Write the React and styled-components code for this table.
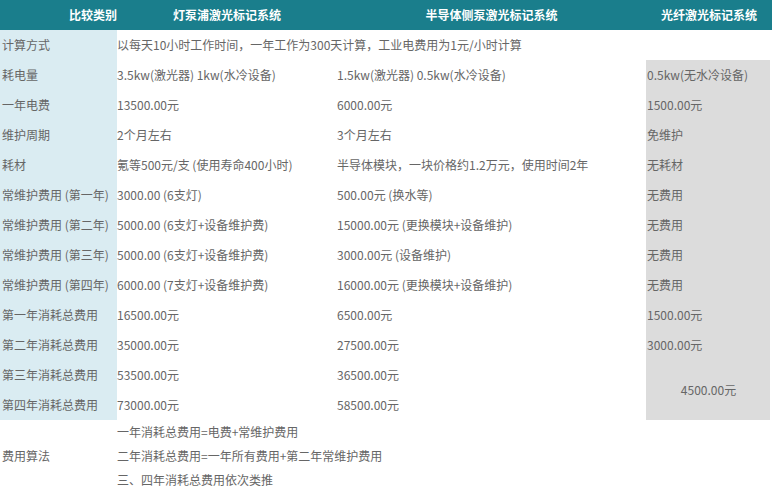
import React from "react";
import styled, { createGlobalStyle } from "styled-components";

const GlobalStyle = createGlobalStyle`
  html, body {
    margin: 0;
    padding: 0;
    background: #ffffff;
  }
  body {
    font-family: "Noto Sans CJK SC", "Noto Sans", sans-serif;
    font-size: 12px;
    color: #666666;
  }
`;

// === Layout ===
const Page = styled.div`
  width: 772px;
`;

const HeaderRow = styled.div`
  display: grid;
  grid-template-columns: 117px 220px 309px 126px;
  height: 30px;
  background: #1a7e8c;
`;

const HeaderCell = styled.div`
  display: flex;
  align-items: center;
  justify-content: ${(p) => (p.$right ? "flex-end" : "center")};
  padding-bottom: 2px;
  color: #ffffff;
  font-weight: 700;
  font-size: 12px;
`;

const Body = styled.div`
  display: grid;
  grid-template-columns: 117px 220px 309px 124px;
  grid-template-rows: repeat(13, 30px) repeat(3, 24px);
`;

const Cell = styled.div`
  display: flex;
  align-items: center;
  justify-content: ${(p) => (p.$center ? "center" : "flex-start")};
  padding-left: ${(p) => p.$pad || 0}px;
  padding-bottom: 2px;
  background: ${(p) => p.$bg || "transparent"};
  grid-column: ${(p) => (p.$colSpan ? `span ${p.$colSpan}` : "auto")};
  grid-row: ${(p) => (p.$rowSpan ? `span ${p.$rowSpan}` : "auto")};
  white-space: nowrap;
  overflow: hidden;
`;

const LabelCell = styled(Cell).attrs((p) => ({ $pad: 2, $bg: p.$plain ? "transparent" : "#daecf2" }))``;
const FiberCell = styled(Cell).attrs({ $pad: 1, $bg: "#dcdcdc" })``;

const rows = [
  ["耗电量", "3.5kw(激光器) 1kw(水冷设备)", "1.5kw(激光器) 0.5kw(水冷设备)", "0.5kw(无水冷设备)"],
  ["一年电费", "13500.00元", "6000.00元", "1500.00元"],
  ["维护周期", "2个月左右", "3个月左右", "免维护"],
  ["耗材", "氪等500元/支 (使用寿命400小时)", "半导体模块，一块价格约1.2万元，使用时间2年", "无耗材"],
  ["常维护费用 (第一年)", "3000.00 (6支灯)", "500.00元 (换水等)", "无费用"],
  ["常维护费用 (第二年)", "5000.00 (6支灯+设备维护费)", "15000.00元 (更换模块+设备维护)", "无费用"],
  ["常维护费用 (第三年)", "5000.00 (6支灯+设备维护费)", "3000.00元 (设备维护)", "无费用"],
  ["常维护费用 (第四年)", "6000.00 (7支灯+设备维护费)", "16000.00元 (更换模块+设备维护)", "无费用"],
  ["第一年消耗总费用", "16500.00元", "6500.00元", "1500.00元"],
  ["第二年消耗总费用", "35000.00元", "27500.00元", "3000.00元"],
];

const tail = [
  ["第三年消耗总费用", "53500.00元", "36500.00元"],
  ["第四年消耗总费用", "73000.00元", "58500.00元"],
];

const formulas = [
  "一年消耗总费用=电费+常维护费用",
  "二年消耗总费用=一年所有费用+第二年常维护费用",
  "三、四年消耗总费用依次类推",
];

export default function App() {
  return (
    <Page>
      <GlobalStyle />
      <HeaderRow>
        <HeaderCell $right>比较类别</HeaderCell>
        <HeaderCell>灯泵浦激光标记系统</HeaderCell>
        <HeaderCell>半导体侧泵激光标记系统</HeaderCell>
        <HeaderCell>光纤激光标记系统</HeaderCell>
      </HeaderRow>
      <Body>
        <LabelCell>计算方式</LabelCell>
        <Cell $colSpan={3}>以每天10小时工作时间，一年工作为300天计算，工业电费用为1元/小时计算</Cell>

        {rows.map(([label, lamp, diode, fiber]) => (
          <React.Fragment key={label}>
            <LabelCell>{label}</LabelCell>
            <Cell>{lamp}</Cell>
            <Cell>{diode}</Cell>
            <FiberCell>{fiber}</FiberCell>
          </React.Fragment>
        ))}

        <LabelCell>{tail[0][0]}</LabelCell>
        <Cell>{tail[0][1]}</Cell>
        <Cell>{tail[0][2]}</Cell>
        <FiberCell $rowSpan={2} $center>4500.00元</FiberCell>
        <LabelCell>{tail[1][0]}</LabelCell>
        <Cell>{tail[1][1]}</Cell>
        <Cell>{tail[1][2]}</Cell>

        <LabelCell $plain $rowSpan={3}>费用算法</LabelCell>
        {formulas.map((f) => (
          <Cell key={f} $colSpan={3}>{f}</Cell>
        ))}
      </Body>
    </Page>
  );
}
